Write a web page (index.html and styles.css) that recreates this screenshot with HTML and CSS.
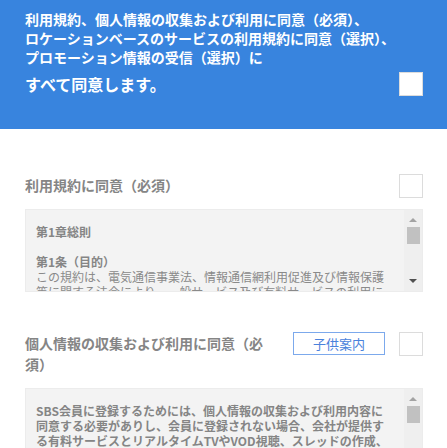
FILE: index.html
```html
<!DOCTYPE html>
<html lang="ja">
  <head>
    <meta charset="UTF-8" />
    <meta name="viewport" content="width=device-width, initial-scale=1.0" />
    <title>利用規約</title>
    <link rel="stylesheet" href="styles.css">
  </head>
  <body>
    <div class="agree-all">
      <p class="agree-all-desc">
        利用規約、個人情報の収集および利用に同意（必須）、<br>
        ロケーションベースのサービスの利用規約に同意（選択）、<br>
        プロモーション情報の受信（選択）に
      </p>
      <div class="agree-all-row">
        <span class="agree-all-title">すべて同意します。</span>
        <span class="check"></span>
      </div>
    </div>

    <div class="terms">
      <section class="term">
        <div class="term-head">
          <h3>利用規約に同意（必須）</h3>
          <span class="check"></span>
        </div>
        <div class="term-box">
          <div class="term-text">
            <strong>第1章総則</strong><br>
            <br>
            <strong>第1条（目的）</strong><br>
            この規約は、電気通信事業法、情報通信網利用促進及び情報保護<br>
            等に関する法令により、一般サービス及び有料サービスの利用に<br>
            関する条件を定めることを目的とします。
          </div>
          <div class="scrollbar">
            <span class="arrow-up"></span>
            <span class="thumb"></span>
            <span class="arrow-down"></span>
          </div>
        </div>
      </section>

      <section class="term term-second">
        <div class="term-head">
          <h3>個人情報の収集および利用に同意（必須）</h3>
          <button class="guide-btn">子供案内</button>
          <span class="check"></span>
        </div>
        <div class="term-box">
          <div class="term-text term-text-bold">
            SBS会員に登録するためには、個人情報の収集および利用内容に<br>
            同意する必要がありし、会員に登録されない場合、会社が提供す<br>
            る有料サービスとリアルタイムTVやVOD視聴、スレッドの作成、<br>
            コメントの作成などのサービスを利用することができません。
          </div>
          <div class="scrollbar">
            <span class="arrow-up"></span>
            <span class="thumb"></span>
            <span class="arrow-down"></span>
          </div>
        </div>
      </section>
    </div>
  </body>
</html>
```

FILE: styles.css
```css
* {
  margin: 0;
  padding: 0;
  box-sizing: border-box;
}
body {
  font-family: "Noto Sans CJK JP", "Noto Sans", sans-serif;
  background-color: #fff;
  overflow: hidden;
}
.agree-all {
  background-color: #3884de;
  color: #fff;
  padding: 10px 24px 33px 25px;
}
.agree-all-desc {
  font-size: 14px;
  font-weight: bold;
  line-height: 19px;
}
.agree-all-row {
  display: flex;
  align-items: center;
  justify-content: space-between;
  margin-top: 5px;
}
.agree-all-title {
  font-size: 16px;
  font-weight: bold;
  line-height: 24px;
}
.check {
  width: 24px;
  height: 24px;
  flex-shrink: 0;
  background-color: #fff;
  border: 1px solid #dcdcdc;
}
.terms {
  padding: 45px 24px 0 25px;
}
.term-second {
  margin-top: 40px;
}
.term-head {
  display: flex;
  align-items: flex-start;
  margin-bottom: 10px;
}
.term-head h3 {
  flex: 1;
  font-size: 14px;
  font-weight: bold;
  line-height: 21px;
  color: #858585;
  padding: 1px 0 3px;
}
.guide-btn {
  width: 92px;
  height: 23px;
  margin: 0 14px 0 24px;
  background-color: #fff;
  border: 1px solid #7ca9ec;
  color: #4a82dc;
  font-family: inherit;
  font-size: 13px;
  line-height: 21px;
}
.term-box {
  height: 83px;
  display: flex;
  background-color: #f3f3f3;
  border: 1px solid #ececec;
  overflow: hidden;
}
.term-text {
  flex: 1;
  padding: 14px 4px 0 10px;
  font-size: 12px;
  line-height: 15px;
  color: #8a8a8a;
  white-space: nowrap;
  overflow: hidden;
}
.term-text strong,
.term-text-bold {
  font-weight: bold;
  color: #858585;
}
.scrollbar {
  width: 18px;
  flex-shrink: 0;
  background-color: #efefef;
  display: flex;
  flex-direction: column;
  align-items: center;
  padding: 8px 0 8px;
}
.arrow-up {
  width: 0;
  height: 0;
  border-left: 4px solid transparent;
  border-right: 4px solid transparent;
  border-bottom: 4px solid #a3a3a3;
}
.thumb {
  width: 13px;
  height: 17px;
  margin-top: 5px;
  background-color: #c1c1c1;
}
.arrow-down {
  width: 0;
  height: 0;
  margin-top: auto;
  border-left: 4px solid transparent;
  border-right: 4px solid transparent;
  border-top: 4px solid #505050;
}
```
